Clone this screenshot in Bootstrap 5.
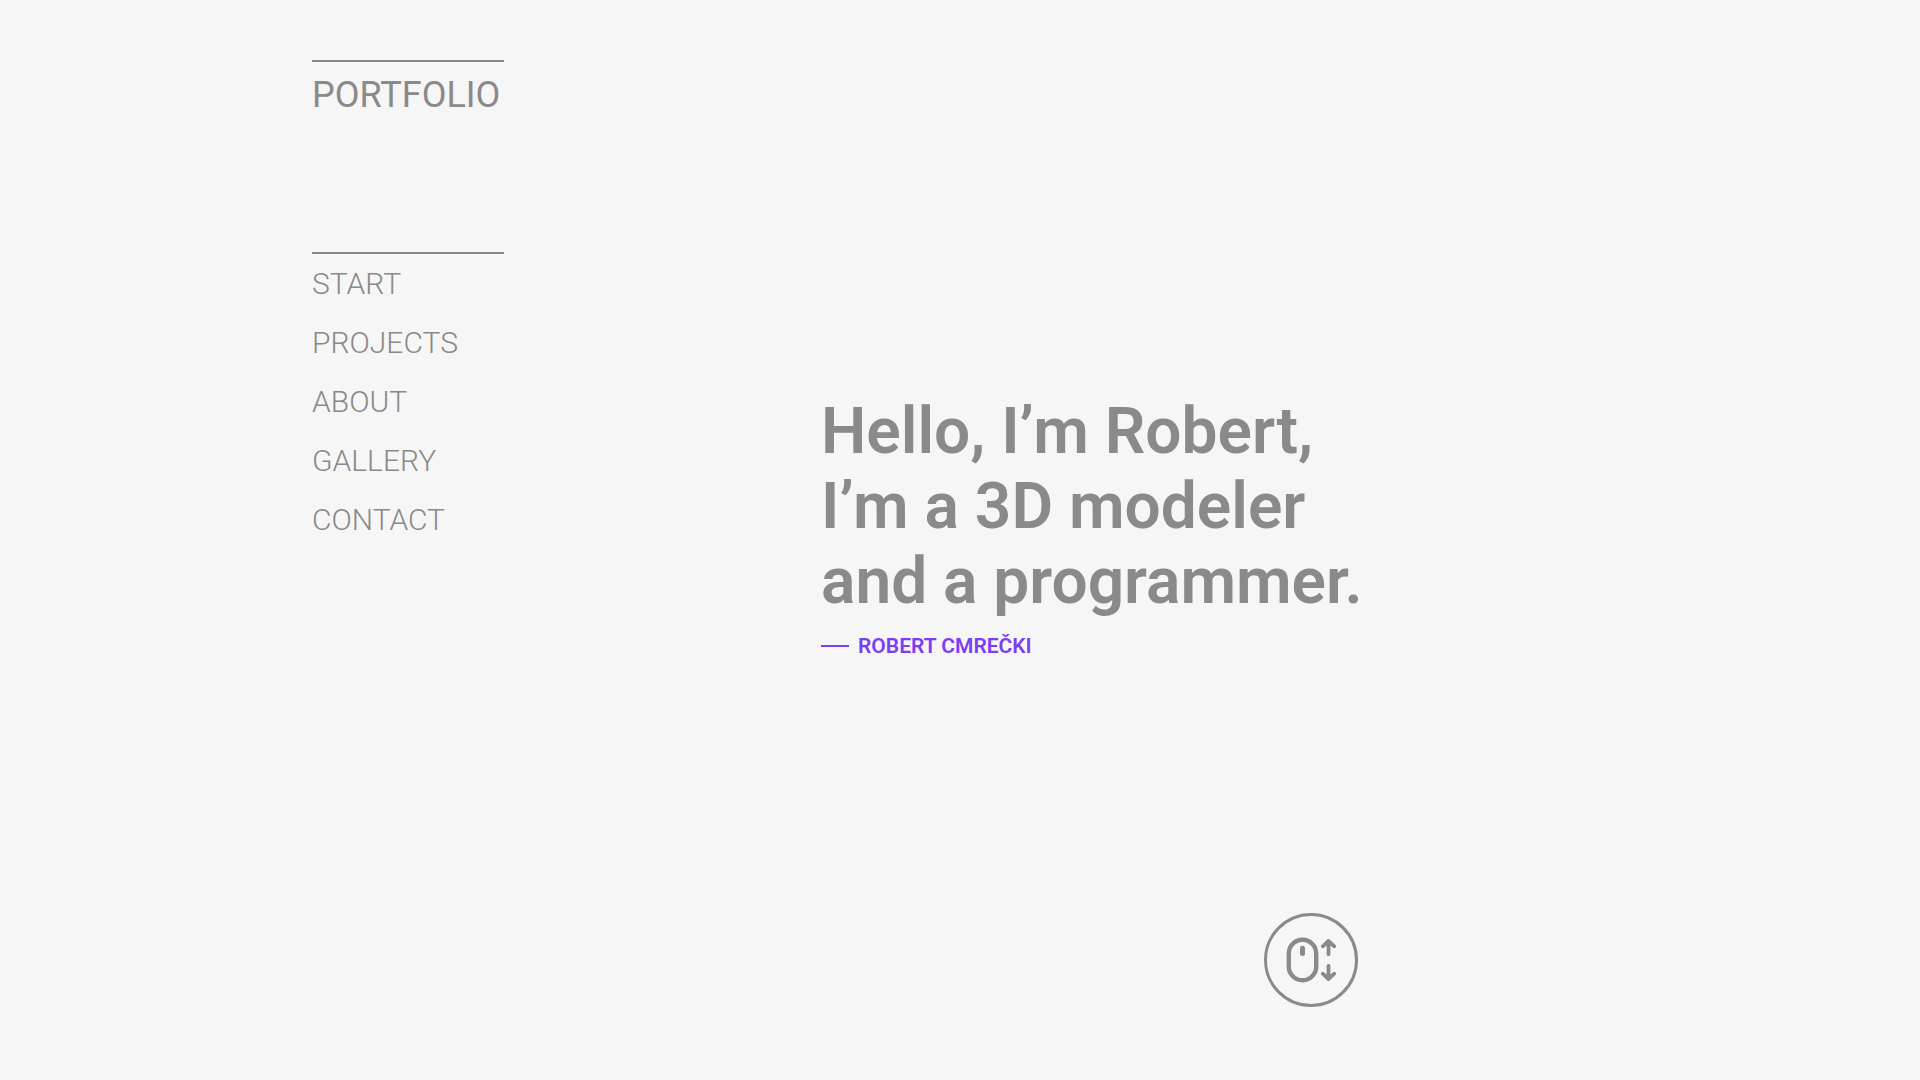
<!DOCTYPE html>
<html lang="en">
<head>
<meta charset="utf-8">
<meta name="viewport" content="width=device-width, initial-scale=1">
<title>Portfolio</title>
<link href="https://cdn.jsdelivr.net/npm/bootstrap@5.3.0/dist/css/bootstrap.min.css" rel="stylesheet">
<style>
body{background:#f6f6f6;color:#8b8989;font-family:Roboto,"Liberation Sans",sans-serif}
.page-wrap{padding:60px 16.25% 0;gap:317px}
.side{width:192px}
.brand{border-top:2px solid #8b8989;font-size:36px;line-height:42px;padding-top:12px;color:#8b8989;margin-bottom:136px}
.menu{border-top:2px solid #8b8989;padding-top:12px;gap:23px}
.menu .nav-link{color:#8b8989;font-size:30px;font-weight:300;line-height:36px}
.hero{padding-top:334px}
.hero h1{font-size:64px;font-weight:600;line-height:75px}
.author{color:#7c3df5;font-size:21px;font-weight:600;line-height:24px;margin-top:15px;gap:9px}
.dash{width:28px;height:2px;background:#7c3df5}
.scroll-btn{width:94px;height:94px;border:3px solid #8b8989;color:#8b8989;margin:255px 5px 0 0;background:none}
</style>
<script src="https://cdn.jsdelivr.net/npm/bootstrap@5.3.0/dist/js/bootstrap.bundle.min.js"></script>
</head>
<body>
<div class="page-wrap d-flex align-items-start">
<header class="side flex-shrink-0">
<a class="brand d-block text-decoration-none" href="#start">PORTFOLIO</a>
<nav class="menu nav flex-column" aria-label="Main">
<a class="nav-link p-0" href="#start">START</a>
<a class="nav-link p-0" href="#projects">PROJECTS</a>
<a class="nav-link p-0" href="#about">ABOUT</a>
<a class="nav-link p-0" href="#gallery">GALLERY</a>
<a class="nav-link p-0" href="#contact">CONTACT</a>
</nav>
</header>
<main class="hero d-flex flex-column" id="start">
<h1 class="mb-0">Hello, I’m Robert,<br>I’m a 3D modeler<br>and a programmer.</h1>
<p class="author d-flex align-items-center mb-0"><span class="dash"></span>ROBERT CMREČKI</p>
<button class="scroll-btn rounded-circle align-self-end p-0 d-flex align-items-center justify-content-center" type="button" aria-label="Scroll">
<svg width="50" height="46" viewBox="0 0 50 46" fill="none" stroke="currentColor" stroke-linecap="round" stroke-linejoin="round"><rect x="2.8" y="2.8" width="27.4" height="40.4" rx="13.7" stroke-width="4.4"/><path d="M16.5 11.2v5.3" stroke-width="5"/><path d="M42.5 4.2v13M36.8 9.3l5.7-5.3 5.7 5.3M42.5 28.8v13M36.8 36.7l5.7 5.3 5.7-5.3" stroke-width="3.8"/></svg>
</button>
</main>
</div>
</body>
</html>
